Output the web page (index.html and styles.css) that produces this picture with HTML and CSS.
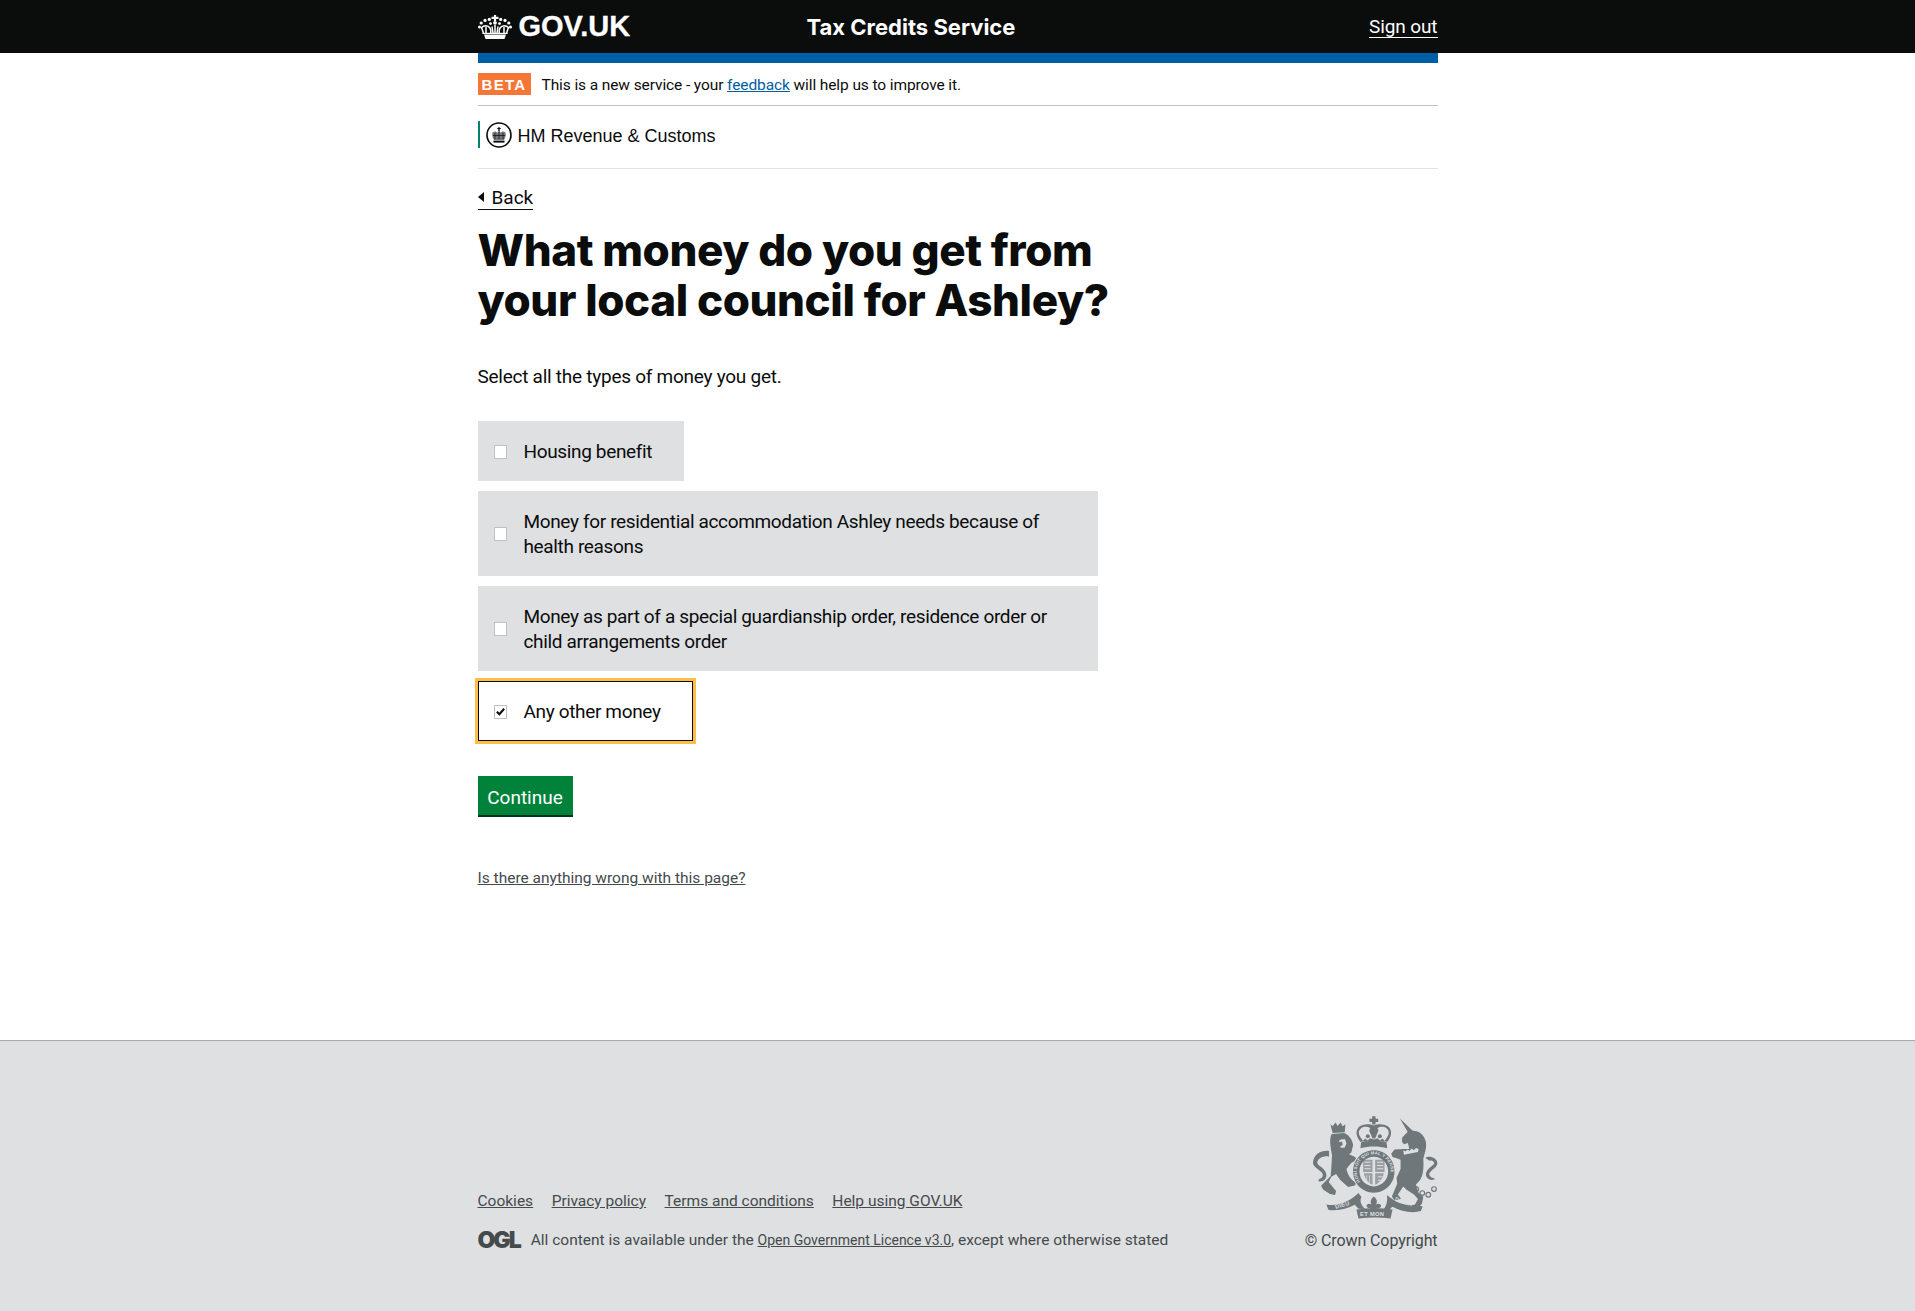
FILE: index.html
```html
<!DOCTYPE html>
<html lang="en">
<head>
<meta charset="utf-8">
<title>What money do you get from your local council for Ashley?</title>
<link rel="stylesheet" href="styles.css">
</head>
<body>
<header class="topbar">
  <div class="wrap topbar-inner">
    <a class="logo" href="#">
      <svg class="crown" viewBox="0 0 34 24" width="34" height="24" aria-hidden="true">
        <g fill="#fff">
          <rect x="15.900" y="0" width="2.200" height="6"/><rect x="13.500" y="1.800" width="7" height="2.200"/>
          <circle cx="11.300" cy="4.400" r="1.600"/><circle cx="22.700" cy="4.400" r="1.600"/><circle cx="7" cy="5.400" r="1.600"/><circle cx="27" cy="5.400" r="1.600"/><circle cx="3.200" cy="8" r="1.600"/><circle cx="30.800" cy="8" r="1.600"/><circle cx="1.500" cy="12" r="1.500"/><circle cx="32.500" cy="12" r="1.500"/>
          <circle cx="17" cy="7.800" r="1.900"/><circle cx="12.500" cy="8.600" r="1.400"/><circle cx="21.500" cy="8.600" r="1.400"/>
          <rect x="4.300" y="17.800" width="25.400" height="1.200" />
          <path d="M6 19.500h22l-1.500 4.500h-19z"/>
        </g>
        <g fill="none" stroke="#fff" stroke-width="1.500">
          <path d="M3 13c3-3 7-3 9 0 1 1.600 1 3 .8 5M31 13c-3-3-7-3-9 0-1 1.600-1 3-.8 5"/>
          <path d="M17 10v8M14 11.500l1 6.500M20 11.500l-1 6.500M3.500 12.500l2 5.500M30.500 12.500l-2 5.500M8 12v6M26 12v6"/>
        </g>
      </svg>
      <span class="logo-text">GOV.UK</span>
    </a>
    <a class="service" href="#">Tax Credits Service</a>
    <a class="signout" href="#">Sign out</a>
  </div>
</header>
<div class="wrap">
  <div class="bluebar"></div>
  <p class="beta"><strong class="tag">BETA</strong><span class="beta-text">This is a new service - your <a href="#">feedback</a> will help us to improve it.</span></p>
  <div class="dept">
    <span class="dept-mark">
      <svg viewBox="0 0 26 26" width="26" height="26" aria-hidden="true">
        <circle cx="13" cy="13" r="12" fill="#fff" stroke="#0b0c0c" stroke-width="1.600"/>
        <path d="M6.500 10.500c2-1.500 4-1 5 .5l.8-2.500h1.400l.8 2.500c1-1.500 3-2 5-.5.8 2 0 5-1.500 7.500h-10c-1.500-2.500-2.300-5.500-1.500-7.500z" fill="#6f777b"/>
        <path d="M9 11v6M13 10v7M17 11v6M7 13.500h12" stroke="#0b0c0c" stroke-width=".7" fill="none"/>
        <rect x="7.500" y="18.600" width="11" height="2" fill="#0b0c0c"/>
        <rect x="12.400" y="5" width="1.200" height="4" fill="#0b0c0c"/><rect x="11.300" y="6" width="3.400" height="1.100" fill="#0b0c0c"/>
      </svg>
    </span>
    <span class="dept-name">HM Revenue &amp; Customs</span>
  </div>
  <main class="main">
    <a class="back" href="#">Back</a>
    <h1 class="title">What money do you get from your local council for Ashley?</h1>
    <p class="lead">Select all the types of money you get.</p>
    <form class="options">
      <label class="option"><span class="box"></span><span class="option-text">Housing benefit</span></label>
      <label class="option"><span class="box"></span><span class="option-text">Money for residential accommodation Ashley needs because of health reasons</span></label>
      <label class="option"><span class="box"></span><span class="option-text">Money as part of a special guardianship order, residence order or child arrangements order</span></label>
      <label class="option option-on"><span class="box"><svg viewBox="0 0 12 12" width="11" height="11" aria-hidden="true"><path d="M2 6.200l2.800 2.800L10 3" fill="none" stroke="#0b0c0c" stroke-width="2.200"/></svg></span><span class="option-text">Any other money</span></label>
    </form>
    <button class="continue" type="button">Continue</button>
    <p class="report"><a href="#">Is there anything wrong with this page?</a></p>
  </main>
</div>
<footer class="footer">
  <div class="wrap footer-inner">
    <div class="footer-left">
      <ul class="footer-links">
        <li><a href="#">Cookies</a></li>
        <li><a href="#">Privacy policy</a></li>
        <li><a href="#">Terms and conditions</a></li>
        <li><a href="#">Help using GOV.UK</a></li>
      </ul>
      <p class="licence"><span class="ogl">OGL</span><span>All content is available under the <a href="#">Open Government Licence v3.0</a>, except where otherwise stated</span></p>
    </div>
    <div class="footer-right">
      <svg class="crest" viewBox="68 48 374 307" width="125" height="103" aria-hidden="true">
        <defs>
          <path id="ring" d="M214 249a51 51 0 1 1 72 0"/>
        </defs>
        <g fill="#6f777b">
          <!-- lion -->
          <path d="M120 72l7 6 8-11 7 10 8-10 7 11 8-6-2 24-36 2z"/>
          <path fill-rule="evenodd" d="M124 101l37-3c14 5 24 18 27 36l-5 22-7 6 18 8 6 8-18 10-14 18c5 18 10 30 30 42l-5 7-20 5-24-22-12-17-14 8-8 16 22 27-3 12-15-3-20-13-7-12 29-29 2-28 2-34c-5-26-8-46-3-59zm30 16l-8 4 1 5 8-2 2 10-8 5 4 4 10-1 5-12-4-13z"/>
          <path d="M116 152c-22-3-44 8-48 33-2 14 17 22 27 32 6 8 0 18-9 19l-2 7c14 3 24-6 24-18 0-13-11-22-23-30-6-6-6-13 2-20 6-5 19-9 29-6z"/>
          <!-- unicorn -->
          <path d="M328 55l39 37-13 8z"/>
          <path d="M350 96c22-12 48 0 55 26 5 18-3 36-7 54 2 24 0 49-10 64l-12 12 8 26 14 12-4 20-12 12-12-4 12-22-12-14-22-14-10-10-16 24 10 14-20 4-8-12 16-38-2-18 12-26v-28l-12-4-12-4-4-10 10-12 28-2h16l-4-18-12 4-6-8 1-12z"/>
          <path d="M338 151l7 2 6-5 6 4 6-7 7 5 6-7 8 3-2 9-42 8z" fill="#dee0e2"/>
          <path d="M404 172c14-7 36 2 36 17 0 11-14 18-22 27-5 7 0 16 10 17l5 2c-8 8-28 2-27-13 0-14 16-22 24-31 3-5-5-12-14-10z"/>
          <circle cx="377" cy="266" r="7" fill="none" stroke="#6f777b" stroke-width="3.500"/><circle cx="395" cy="278" r="7" fill="none" stroke="#6f777b" stroke-width="3.500"/><circle cx="413" cy="283" r="7" fill="none" stroke="#6f777b" stroke-width="3.500"/><circle cx="430" cy="266" r="7" fill="none" stroke="#6f777b" stroke-width="3.500"/>
          <!-- shield ring -->
          <circle cx="250" cy="213" r="66" fill="#dee0e2"/>
          <path fill-rule="evenodd" d="M250 150c-35 0-62 28-62 63 0 36 27 64 62 64s62-28 62-64c0-35-27-63-62-63zm0 19c24 0 43 20 43 44 0 25-19 45-43 45s-43-20-43-45c0-24 19-44 43-44z"/>
          <path d="M218 178h28v37h-28zM254 178h28v37h-28zM220 219h26v34c-13-5-22-16-26-34zM254 219h26c-4 18-13 29-26 34z" opacity=".62"/>
          <g fill="#dee0e2">
            <path d="M222 184h18v3h-18zM222 194h18v3h-18zM222 204h18v3h-18zM260 184h18v3h-18zM260 194h18v3h-18zM260 204h18v3h-18zM262 228h14v3h-14zM262 238h10v3h-10zM228 225v20h2v-20zM236 225v24h2v-24z"/>
          </g>
          <text class="crest-ring" fill="#dee0e2"><textPath href="#ring" startOffset="3%">HONI SOIT QUI MAL Y PENSE</textPath></text>
          <!-- crown -->
          <path d="M245 48h10v8h8v9h-8v8h-10v-8h-8v-9h8z"/>
          <path d="M250 76c-12-6-30-6-42 2-12 9-12 25-4 38l6 9 8-3-8-11c-6-9-7-20 2-27 8-6 20-5 27 0l-3 7 10 24h8l10-24-3-7c7-5 19-6 27 0 9 7 8 18 2 27l-8 11 8 3 6-9c8-13 8-29-4-38-12-8-30-8-42-2z"/>
          <circle cx="232" cy="108" r="6"/><circle cx="268" cy="108" r="6"/><path d="M216 124l8-9 8 6 6-7 12 4 12-4 6 7 8-6 8 9z"/>
          <path d="M212 126c24-6 52-6 76 0l2 18c-26-7-54-7-80 0z"/>
          <!-- motto -->
          <path d="M108 312c34 6 66-6 96-34l9 12c-6 12-2 24 11 36l-20-1-11-12c-24 12-52 20-79 15z"/>
          <path d="M289 284c28 24 56 34 86 28l21 6-5 14c-30 8-58 0-86-13l-8 9-19 1c10-12 14-28 11-45z"/>
          <path d="M198 327c36-6 72-6 108 0l-6 27c-32-4-64-4-96 0z"/>
          <path d="M250 288c10 8 11 15 7 24 6-4 13-3 15 4-1 7-8 9-13 6l5 7h-28l5-7c-5 3-12 1-13-6 2-7 9-8 15-4-4-9-3-16 7-24z"/>
          <text class="crest-motto" x="136" y="325" fill="#dee0e2" transform="rotate(-16 136 325)">DIEU</text>
          <text class="crest-motto" x="312" y="300" fill="#dee0e2" transform="rotate(20 312 300)">DROIT</text>
          <text class="crest-motto" x="209" y="348" fill="#dee0e2">ET MON</text>
        </g>
      </svg>
      <p class="copyright">© Crown Copyright</p>
    </div>
  </div>
</footer>
</body>
</html>
```
FILE: styles.css
```css
* { box-sizing: border-box; }
html, body { margin: 0; padding: 0; }
body {
  min-height: 1311px;
  display: flex;
  flex-direction: column;
  background: #fff;
  color: #0b0c0c;
  font-family: Roboto, "Noto Sans", sans-serif;
}
a { color: inherit; }
p { margin: 0; }
.wrap { width: 960px; margin: 0 auto; }

.topbar { height: 53px; background: #0b0c0c; color: #fff; }
.topbar-inner { height: 53px; display: flex; align-items: center; }
.logo { display: flex; align-items: center; gap: 7px; width: 329px; text-decoration: none; }
.logo-text { font: 700 29px/1 "Liberation Sans", sans-serif; -webkit-text-stroke: .3px #fff; }
.service { font: 700 22px/1 Inter, sans-serif; text-decoration: none; }
.signout { margin-left: auto; padding-top: 2px; font-size: 19px; line-height: 20px; letter-spacing: -.1px; text-decoration: none; border-bottom: 1px solid #fff; }

.bluebar { height: 10px; background: #005ea5; }
.beta { height: 43px; display: flex; align-items: center; gap: 11px; border-bottom: 1px solid #bfc1c3; font-size: 15.5px; letter-spacing: -.1px; }
.beta-text { padding-top: 2px; }
.tag { background: #f47738; color: #fff; width: 53px; height: 22px; display: flex; justify-content: center; align-items: center; font: 700 15px/1 "Liberation Sans", sans-serif; letter-spacing: 1.300px; }
.beta a { color: #005ea5; }

.dept { height: 63px; border-bottom: 1px solid #dee0e2; display: flex; align-items: flex-start; padding-top: 15px; }
.dept-mark { height: 27px; border-left: 2px solid #00826c; padding-left: 6px; display: flex; align-items: center; }
.dept-name { font: 18px/31px "Liberation Sans", sans-serif; margin-left: 6px; }

.main { padding-top: 16px; }
.back { display: inline-block; padding: 2px 0 0 14px; font-size: 19px; line-height: 22px; text-decoration: none; border-bottom: 1px solid #0b0c0c; position: relative; }
.back::before { content: ""; position: absolute; left: 0; top: 7px; border: 5px solid transparent; border-left-width: 0; border-right: 6px solid #0b0c0c; }
.title { width: 660px; margin: 15px 0 0; font: 800 44px/50px Inter, sans-serif; letter-spacing: -.42px; }
.lead { margin-top: 39px; font-size: 19px; line-height: 25px; letter-spacing: -.26px; }

.options { display: flex; flex-direction: column; align-items: flex-start; gap: 10px; margin-top: 32px; width: 620px; }
.option { display: flex; align-items: center; background: #dee0e2; padding: 18px 32px 17px 16px; font-size: 19px; line-height: 25px; letter-spacing: -.35px; }
.box { flex: none; width: 13px; height: 14px; background: #fff; border: 1px solid #bfc1c3; margin-right: 17px; display: flex; align-items: center; justify-content: center; }
.option-on { background: #fff; border: 1px solid #0b0c0c; outline: 3px solid #ffbf47; padding: 17px 31px 16px 15px; }
.continue { display: block; margin-top: 35px; width: 95px; height: 41px; padding: 4px 0 0; border: 0; border-bottom: 2px solid #003618; background: #00823b; color: #fff; font-family: inherit; font-size: 19px; }
.report { margin-top: 51px; font-size: 15.5px; line-height: 20px; color: #454a4c; }

.footer { margin-top: auto; height: 271px; background: #dee0e2; border-top: 1px solid #a1acb2; color: #454a4c; }
.footer-inner { height: 100%; display: flex; justify-content: space-between; align-items: flex-end; padding-bottom: 60px; }
.footer-left { padding-bottom: 1px; }
.footer-links { display: flex; gap: 18.500px; margin: 0 0 19px; padding: 0; list-style: none; font-size: 15.5px; line-height: 20px; }
.licence { display: flex; align-items: center; gap: 11px; font-size: 15.5px; line-height: 20px; }
.licence a { font-size: 14px; }
.ogl { font: 900 23px/20px Inter, sans-serif; letter-spacing: -2px; }
.footer-right { display: flex; flex-direction: column; align-items: flex-end; }
.crest { margin-bottom: 12px; }
.copyright { font-size: 16px; line-height: 20px; letter-spacing: -.1px; }
.crest-ring { font: 700 13px "Liberation Sans", sans-serif; letter-spacing: .5px; }
.crest-motto { font: 700 17px "Liberation Sans", sans-serif; letter-spacing: 1px; }
```
